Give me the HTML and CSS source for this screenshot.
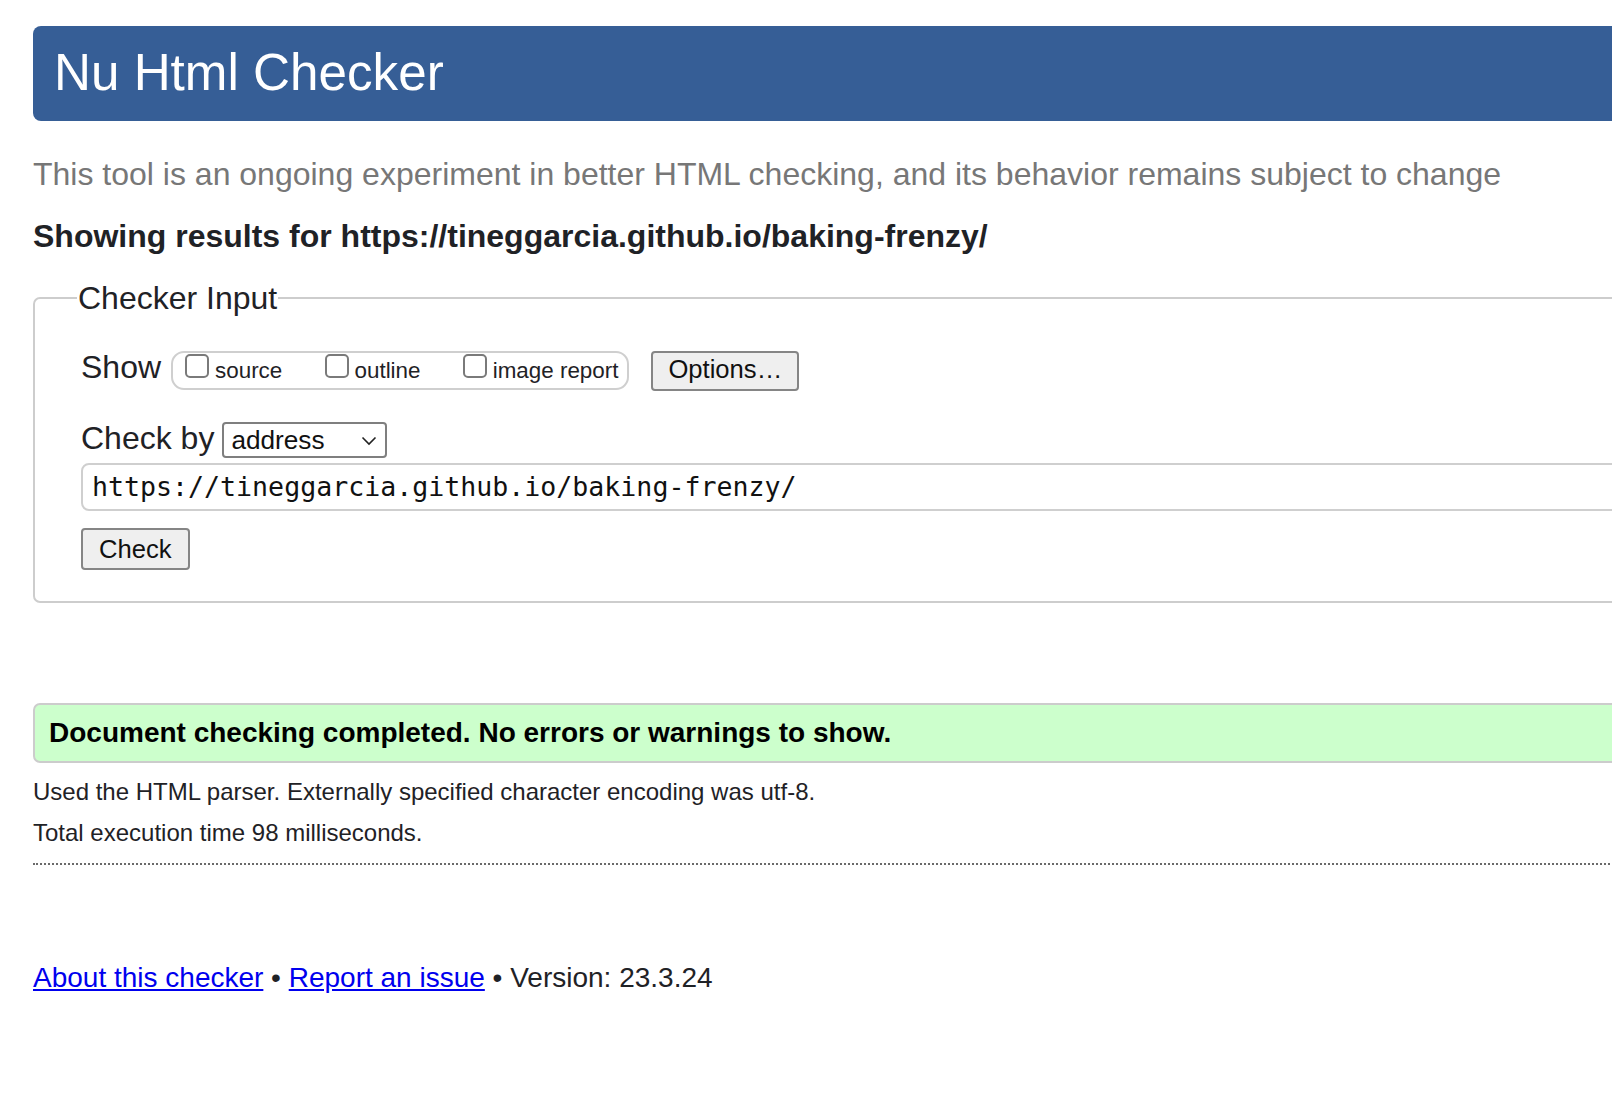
FILE: index.html
```html
<!DOCTYPE html>
<html lang="en">
<head>
<meta charset="utf-8">
<title>Showing results for https://tineggarcia.github.io/baking-frenzy/ - Nu Html Checker</title>
<link rel="stylesheet" href="styles.css">
</head>
<body>
<div class="page">
  <header class="banner"><h1>Nu Html Checker</h1></header>
  <p class="lede">This tool is an ongoing experiment in better HTML checking, and its behavior remains subject to change</p>
  <p class="results-for">Showing results for https://tineggarcia.github.io/baking-frenzy/</p>

  <form class="checker">
    <fieldset class="checker-input">
      <legend>Checker Input</legend>
      <div class="row">
        <span class="label">Show</span>
        <span class="pill">
          <label class="opt"><span class="box"></span><span class="opt-text">source</span></label>
          <label class="opt"><span class="box"></span><span class="opt-text">outline</span></label>
          <label class="opt"><span class="box"></span><span class="opt-text">image report</span></label>
        </span>
        <button type="button" class="btn btn-options">Options…</button>
      </div>
      <div class="row row-by">
        <span class="label">Check by</span>
        <span class="select">address<svg class="chev" width="16" height="10" viewBox="0 0 16 10"><polyline points="1.5,1.5 8,8 14.5,1.5" fill="none" stroke="#222" stroke-width="1.6"/></svg></span>
      </div>
      <div class="url">https://tineggarcia.github.io/baking-frenzy/</div>
      <button type="button" class="btn btn-check">Check</button>
    </fieldset>
  </form>

  <div class="success">Document checking completed. No errors or warnings to show.</div>
  <p class="meta meta-first">Used the HTML parser. Externally specified character encoding was utf-8.</p>
  <p class="meta">Total execution time 98 milliseconds.</p>
  <hr class="dots">
  <p class="footer"><a href="#">About this checker</a> • <a href="#">Report an issue</a> • Version: 23.3.24</p>
</div>
</body>
</html>
```

FILE: styles.css
```css
html {
  overflow: hidden;
  background: #fff;
}
body {
  margin: 0;
  font-family: "Liberation Sans", Arial, Helvetica, sans-serif;
  color: #222;
}
.page {
  width: 1820px;
  padding: 26px 0 0 33px;
}
.banner {
  background: #365e96;
  border-radius: 8px;
  padding: 17px 21px 18px;
  height: 60px;
}
.banner h1 {
  margin: 0;
  font-size: 51.2px;
  line-height: 60px;
  font-weight: normal;
  color: #fff;
}
.lede {
  margin: 33px 0 0;
  font-size: 32px;
  line-height: 40px;
  color: #777;
}
.results-for {
  margin: 22px 0 0;
  font-size: 32px;
  line-height: 40px;
  font-weight: bold;
  color: #1f2226;
}
.checker {
  margin: 22px 0 0;
}
.checker-input {
  margin: 0;
  border: 2px solid #cdcdcd;
  border-radius: 7px;
  padding: 29px 0 31px 46px;
  min-width: 0;
}
.checker-input legend {
  margin-left: -4px;
  padding: 0 1px;
  font-size: 32px;
  line-height: 40px;
  color: #1f2226;
}
.row {
  display: flex;
  align-items: baseline;
}
.label {
  font-size: 32px;
  line-height: 40px;
  color: #1f2226;
}
.pill {
  display: inline-block;
  box-sizing: border-box;
  height: 39px;
  margin-left: 10px;
  padding: 1px 9px 0 12px;
  border: 2px solid #cfcfcf;
  border-radius: 13px;
  font-size: 22.4px;
  line-height: 24px;
  white-space: nowrap;
}
.opt {
  display: inline;
  margin-right: 36px;
}
.opt:last-child {
  margin-right: 0;
}
.box {
  display: inline-block;
  box-sizing: border-box;
  width: 24px;
  height: 24px;
  border: 2px solid #7a7a7a;
  border-radius: 5px;
  background: #fff;
  vertical-align: baseline;
  margin-right: 6px;
}
.opt-text {
  color: #1f2226;
}
.btn {
  font-family: "Liberation Sans", Arial, Helvetica, sans-serif;
  font-size: 25.6px;
  color: #111;
  background: #efefef;
  border: 2px solid #858585;
  border-radius: 4px;
  margin: 0;
}
.btn-options {
  margin-left: 22px;
  padding: 0 15px 4px;
  line-height: 32px;
  height: 40px;
}
.row-by {
  margin-top: 27px;
}
.select {
  display: inline-block;
  box-sizing: border-box;
  width: 165px;
  height: 36px;
  margin-left: 8px;
  padding: 0 0 0 7px;
  border: 2px solid #7f7f7f;
  border-radius: 4px;
  font-size: 26.2px;
  line-height: 32px;
  color: #111;
  position: relative;
}
.chev {
  position: absolute;
  right: 8px;
  top: 12px;
}
.url {
  box-sizing: border-box;
  height: 48px;
  margin-top: 5px;
  padding: 0 9px;
  border: 2px solid #cfcfcf;
  border-radius: 8px;
  font-family: "DejaVu Sans Mono", "Liberation Mono", monospace;
  font-size: 26.6px;
  line-height: 44px;
  color: #111;
}
.btn-check {
  display: block;
  margin-top: 17px;
  height: 42px;
  padding: 0 16px;
  line-height: 38px;
}
.success {
  margin-top: 100px;
  box-sizing: border-box;
  height: 60px;
  padding: 2px 14px 0;
  border: 2px solid #cccccc;
  border-radius: 7px;
  background: #ccffcc;
  font-size: 28px;
  font-weight: bold;
  line-height: 52px;
  color: #000;
}
.meta {
  margin: 9px 0 0;
  font-size: 24px;
  line-height: 32px;
  color: #1f2226;
}
.meta-first {
  margin-top: 13px;
}
.dots {
  margin: 14px 0 0;
  border: 0;
  border-top: 2px dotted #6a6a6a;
  height: 0;
}
.footer {
  margin: 95px 0 0;
  font-size: 28px;
  line-height: 36px;
  color: #1f2226;
}
.footer a {
  color: #0000ee;
  text-decoration: underline;
}
```
